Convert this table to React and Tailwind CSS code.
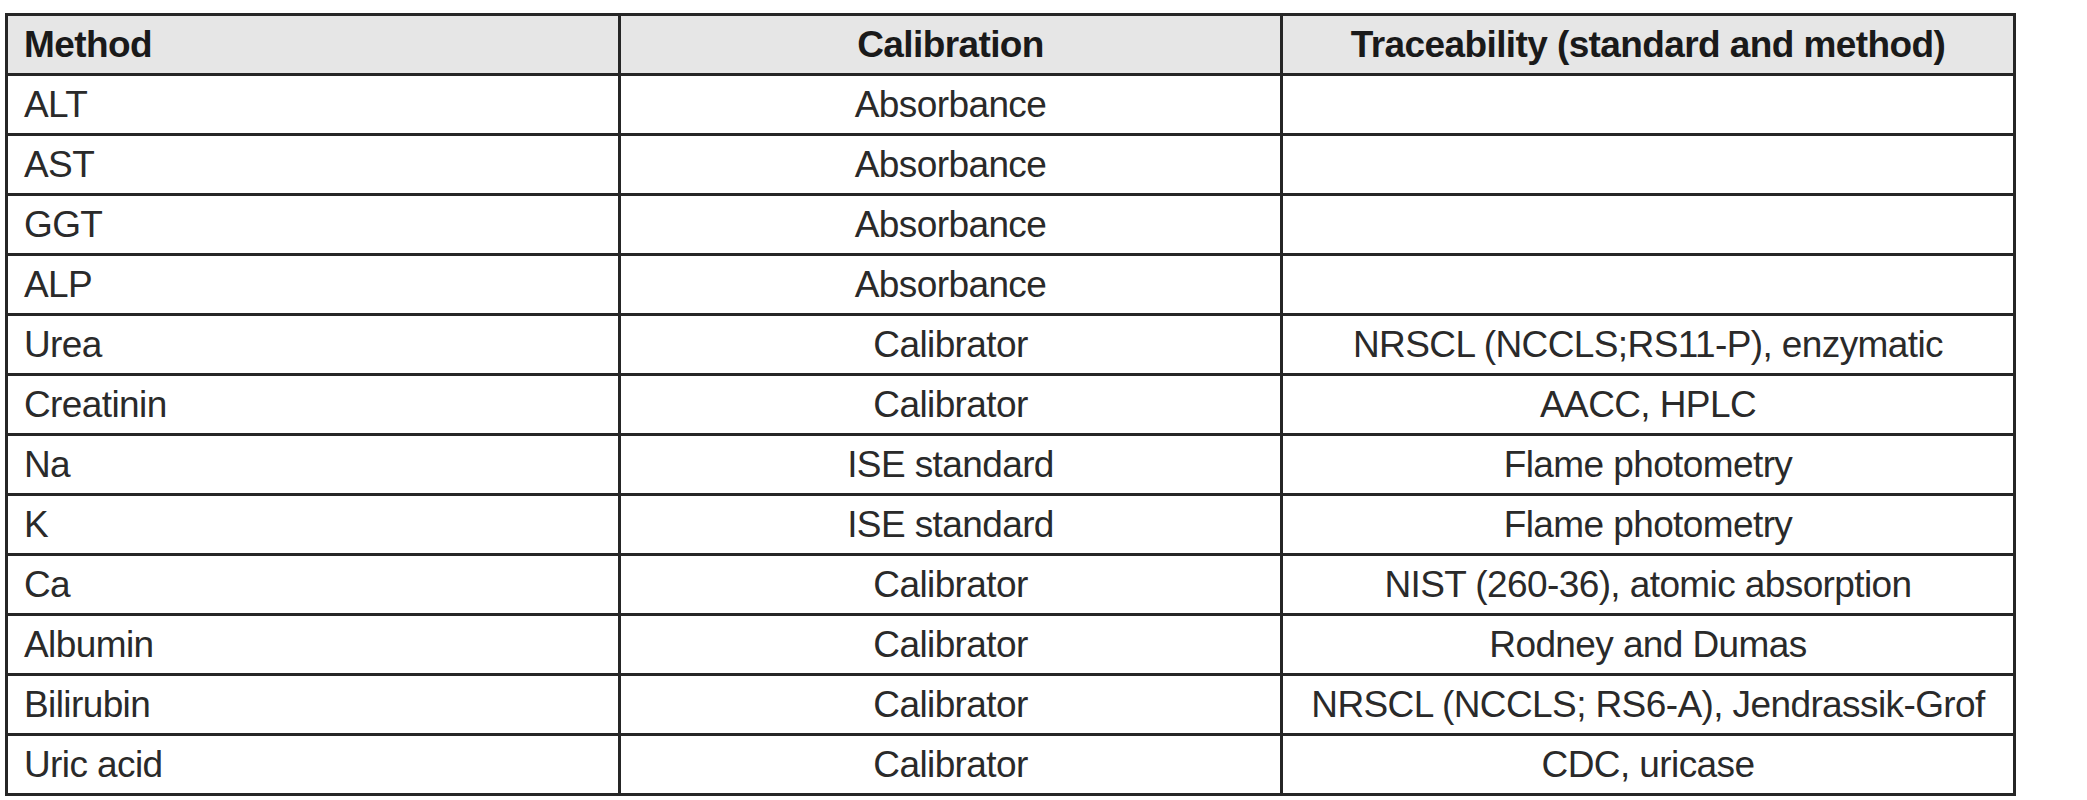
import React from 'react'

const rows = [
    { method: 'ALT', calibration: 'Absorbance', trace: '' },
    { method: 'AST', calibration: 'Absorbance', trace: '' },
    { method: 'GGT', calibration: 'Absorbance', trace: '' },
    { method: 'ALP', calibration: 'Absorbance', trace: '' },
    { method: 'Urea', calibration: 'Calibrator', trace: 'NRSCL (NCCLS;RS11-P), enzymatic' },
    { method: 'Creatinin', calibration: 'Calibrator', trace: 'AACC, HPLC' },
    { method: 'Na', calibration: 'ISE standard', trace: 'Flame photometry' },
    { method: 'K', calibration: 'ISE standard', trace: 'Flame photometry' },
    { method: 'Ca', calibration: 'Calibrator', trace: 'NIST (260-36), atomic absorption' },
    { method: 'Albumin', calibration: 'Calibrator', trace: 'Rodney and Dumas' },
    { method: 'Bilirubin', calibration: 'Calibrator', trace: 'NRSCL (NCCLS; RS6-A), Jendrassik-Grof' },
    { method: 'Uric acid', calibration: 'Calibrator', trace: 'CDC, uricase' },
]

const App = () => {
    return (
        <div className="min-h-[800px] bg-white pt-[13px] pl-[5px] font-['Liberation_Sans',Arial,sans-serif]">
            <table className="w-[2008px] table-fixed border-collapse text-[37px] tracking-[-0.6px] text-[#2a2a2a]">
                <colgroup>
                    <col className="w-[613px]" />
                    <col className="w-[662px]" />
                    <col className="w-[733px]" />
                </colgroup>
                <thead className="bg-[#e6e6e6] text-[#1a1a1a]">
                    <tr className="h-[60px]">
                        <th className="border-[3px] border-[#262626] px-[16px] text-left font-bold leading-none">
                            Method
                        </th>
                        <th className="border-[3px] border-[#262626] px-[16px] text-center font-bold leading-none">
                            Calibration
                        </th>
                        <th className="border-[3px] border-[#262626] px-[16px] text-center font-bold leading-none">
                            Traceability (standard and method)
                        </th>
                    </tr>
                </thead>
                <tbody>
                    {rows.map((row, i) => (
                        <tr key={i} className="h-[60px]">
                            <td className="border-[3px] border-[#262626] px-[16px] text-left leading-none">{row.method}</td>
                            <td className="border-[3px] border-[#262626] px-[16px] text-center leading-none">{row.calibration}</td>
                            <td className="border-[3px] border-[#262626] px-[16px] text-center leading-none">{row.trace}</td>
                        </tr>
                    ))}
                </tbody>
            </table>
        </div>
    )
}

export default App
